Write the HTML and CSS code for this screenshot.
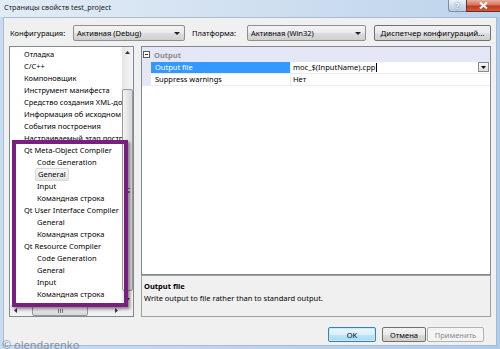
FILE: index.html
```html
<!DOCTYPE html>
<html lang="ru">
<head>
    <meta charset="UTF-8">
    <title>Страницы свойств test_project</title>
    <link rel="stylesheet" href="styles.css">
</head>
<body>

<div class="window">
    <div class="titlebar">
        <span class="title">Страницы свойств test_project</span>
        <div class="caption-buttons">
            <span class="cap-help">?</span>
            <span class="cap-close">
                <svg width="9" height="7" viewBox="0 0 9 7"><path d="M1 0.5 L8 6.5 M8 0.5 L1 6.5" stroke="#fff" stroke-width="2"/></svg>
            </span>
        </div>
    </div>

    <div class="client">
        <div class="config-row">
            <span class="config-label label-config">Конфигурация:</span>
            <div class="combo combo-config">
                <span>Активная (Debug)</span>
                <svg width="6" height="3" viewBox="0 0 6 3"><path d="M0 0h6L3 3z" fill="#222"/></svg>
            </div>
            <span class="config-label label-platform">Платформа:</span>
            <div class="combo combo-platform">
                <span>Активная (Win32)</span>
                <svg width="6" height="3" viewBox="0 0 6 3"><path d="M0 0h6L3 3z" fill="#222"/></svg>
            </div>
            <div class="btn btn-manager">Диспетчер конфигураций...</div>
        </div>

        <div class="panes">
            <div class="tree-pane">
                <div class="tree-view">
                    <ul class="tree">
                        <li class="node">Отладка</li>
                        <li class="node">C/C++</li>
                        <li class="node">Компоновщик</li>
                        <li class="node">Инструмент манифеста</li>
                        <li class="node">Средство создания XML-документов</li>
                        <li class="node">Информация об исходном коде</li>
                        <li class="node">События построения</li>
                        <li class="node">Настраиваемый этап построения</li>
                        <li class="node">Qt Meta-Object Compiler</li>
                        <li class="node child">Code Generation</li>
                        <li class="node child"><span class="current">General</span></li>
                        <li class="node child">Input</li>
                        <li class="node child">Командная строка</li>
                        <li class="node">Qt User Interface Compiler</li>
                        <li class="node child">General</li>
                        <li class="node child">Командная строка</li>
                        <li class="node">Qt Resource Compiler</li>
                        <li class="node child">Code Generation</li>
                        <li class="node child">General</li>
                        <li class="node child">Input</li>
                        <li class="node child">Командная строка</li>
                    </ul>
                    <div class="vscroll">
                        <div class="sb-arrow">
                            <svg width="5" height="3" viewBox="0 0 5 3"><path d="M0 3h5L2.5 0z" fill="#333"/></svg>
                        </div>
                        <div class="vtrack"><div class="thumb vthumb"><span class="grip-v"></span></div></div>
                        <div class="sb-arrow">
                            <svg width="5" height="3" viewBox="0 0 5 3"><path d="M0 0h5L2.5 3z" fill="#333"/></svg>
                        </div>
                    </div>
                </div>
                <div class="hscroll">
                    <div class="sb-arrow">
                        <svg width="3" height="5" viewBox="0 0 3 5"><path d="M3 0v5L0 2.5z" fill="#333"/></svg>
                    </div>
                    <div class="htrack"><div class="thumb hthumb"><span class="grip-h"></span></div></div>
                    <div class="sb-arrow">
                        <svg width="3" height="5" viewBox="0 0 3 5"><path d="M0 0v5L3 2.5z" fill="#333"/></svg>
                    </div>
                    <div class="sb-corner"></div>
                </div>

                <!-- annotation frame drawn over the tree -->
                <div class="mark-box"></div>
            </div>

            <div class="right-pane">
                <div class="grid">
                    <div class="cat-row">
                        <span class="expander"></span>
                        <span class="cat-name">Output</span>
                    </div>
                    <div class="prop-row">
                        <span class="prop-margin"></span>
                        <span class="prop-name selected">Output file</span>
                        <span class="prop-value">
                            <span>moc_$(InputName).cpp<span class="caret"></span></span>
                            <span class="drop-btn">
                                <svg width="5" height="3" viewBox="0 0 5 3"><path d="M0 0h5L2.5 3z" fill="#111"/></svg>
                            </span>
                        </span>
                    </div>
                    <div class="prop-row">
                        <span class="prop-margin"></span>
                        <span class="prop-name">Suppress warnings</span>
                        <span class="prop-value">Нет</span>
                    </div>
                </div>
                <div class="description">
                    <div class="desc-title">Output file</div>
                    <div class="desc-text">Write output to file rather than to standard output.</div>
                </div>
            </div>
        </div>

        <div class="dialog-buttons">
            <div class="btn btn-ok">OK</div>
            <div class="btn btn-cancel">Отмена</div>
            <div class="btn btn-apply">Применить</div>
        </div>
    </div>

    <div class="watermark">© olendarenko</div>
</div>

</body>
</html>
```

FILE: styles.css
```css
* {
    box-sizing: border-box;
}

body {
    margin: 0;
    width: 500px;
    height: 349px;
    overflow: hidden;
    font-family: "Noto Sans", "Open Sans", sans-serif;
    font-size: 7.5px;
    color: #000;
}

.window {
    position: relative;
    width: 500px;
    height: 349px;
    display: flex;
    flex-direction: column;
    background: linear-gradient(90deg, #c9dbef, #bcd2ea 60%, #aecbe8);
    overflow: hidden;
}

/* Title bar */
.titlebar {
    height: 17px;
    display: flex;
    justify-content: space-between;
    align-items: flex-start;
    padding-left: 4px;
    background: linear-gradient(90deg, #e2ecf6, #d2e1f1 45%, #bdd3eb);
}

.title {
    font-size: 7.3px;
    line-height: 15px;
    color: #1a1a1a;
}

.caption-buttons {
    display: flex;
    margin-right: -6px;
}

.cap-help {
    width: 18px;
    height: 12px;
    border: 1px solid #7b8ea8;
    border-right: none;
    border-top: none;
    border-radius: 0 0 0 3px;
    background: linear-gradient(#eef3f9, #cfdceb 50%, #bccde2);
    color: #fff;
    text-shadow: 0 0 2px #3a4d66;
    font-size: 8px;
    font-weight: bold;
    line-height: 11px;
    text-align: center;
}

.cap-close {
    width: 40px;
    height: 12px;
    border: 1px solid #6b2f25;
    border-top: none;
    border-radius: 0 0 3px 0;
    background: linear-gradient(#eab0a2, #d7735c 45%, #c2391e 55%, #d25a3c);
    display: flex;
    align-items: center;
    padding-left: 12px;
}

/* Client area */
.client {
    flex: 1;
    margin: 0 3px 3px;
    background: #f0f0f0;
    border: 1px solid #a6bbd4;
    display: flex;
    flex-direction: column;
}

.config-row {
    display: flex;
    align-items: center;
    height: 16px;
    margin-top: 7px;
    padding-left: 6px;
}

.config-label {
    white-space: nowrap;
}

.label-config {
    width: 63px;
}

.label-platform {
    width: 55px;
    margin-left: 7px;
}

.combo {
    height: 16px;
    border: 1px solid #8e8f8f;
    border-radius: 2px;
    background: linear-gradient(#f3f3f3, #ebebeb 50%, #dddddd 51%, #cfcfcf);
    display: flex;
    align-items: center;
    justify-content: space-between;
    padding: 0 4px 0 3px;
}

.combo-config {
    width: 112px;
}

.combo-platform {
    width: 119px;
}

.btn {
    height: 16px;
    border: 1px solid #707070;
    border-radius: 2px;
    background: linear-gradient(#f2f2f2, #ebebeb 50%, #dddddd 51%, #cfcfcf);
    display: flex;
    align-items: center;
    justify-content: center;
    white-space: nowrap;
}

.btn-manager {
    width: 117px;
    margin-left: 8px;
    font-size: 7.8px;
}

/* Panes */
.panes {
    display: flex;
    gap: 7px;
    height: 271px;
    margin-top: 5px;
    padding: 0 5px;
}

.tree-pane {
    position: relative;
    width: 125px;
    border: 1px solid #828790;
    background: #fff;
    display: flex;
    flex-direction: column;
}

.tree-view {
    flex: 1;
    display: flex;
    min-height: 0;
}

.tree {
    flex: 1;
    list-style: none;
    margin: 0;
    padding: 1px 0 0;
    overflow: hidden;
}

.node {
    height: 12px;
    line-height: 12px;
    padding-left: 14px;
    white-space: nowrap;
}

.node.child {
    padding-left: 27px;
}

.current {
    display: inline-block;
    margin-left: -2px;
    padding: 0 2px;
    line-height: 11px;
    border: 1px solid #d9d9d9;
    border-radius: 2px;
    background: linear-gradient(#f8f8f8, #e5e5e5);
}

.vscroll {
    width: 11px;
    display: flex;
    flex-direction: column;
    background: linear-gradient(90deg, #e6e6e6, #f4f4f4);
}

.sb-arrow {
    width: 11px;
    height: 11px;
    flex: none;
    display: flex;
    align-items: center;
    justify-content: center;
}

.vtrack {
    flex: 1;
    padding: 31px 0 3px;
}

.thumb {
    border: 1px solid #999;
    border-radius: 2px;
    display: flex;
    align-items: center;
    justify-content: center;
}

.vthumb {
    height: 100%;
    background: linear-gradient(90deg, #f4f4f4, #e6e6e6 50%, #d6d6d6);
}

.grip-v {
    width: 5px;
    height: 5px;
    border-top: 1px solid #7a7a7a;
    border-bottom: 1px solid #7a7a7a;
    background: linear-gradient(#fff 0 1px, #7a7a7a 1px 2px, transparent 2px);
    background-position: 0 1px;
}

.hscroll {
    height: 11px;
    display: flex;
    background: linear-gradient(#e6e6e6, #f4f4f4);
}

.htrack {
    flex: 1;
    padding: 0 23px 0 11px;
}

.hthumb {
    width: 56px;
    height: 100%;
    background: linear-gradient(#f4f4f4, #e6e6e6 50%, #d6d6d6);
}

.grip-h {
    width: 5px;
    height: 4px;
    border-left: 1px solid #7a7a7a;
    border-right: 1px solid #7a7a7a;
    background: linear-gradient(90deg, transparent 1px, #7a7a7a 1px 2px, transparent 2px);
}

.sb-corner {
    width: 11px;
    background: #f0f0f0;
}

.mark-box {
    position: absolute;
    left: 2px;
    top: 93px;
    width: 116px;
    height: 167px;
    border: 4px solid #7a1f82;
    box-shadow: 2px 2px 3px rgba(0, 0, 0, 0.45);
}

/* Property grid */
.right-pane {
    width: 350px;
    display: flex;
    flex-direction: column;
}

.grid {
    height: 229px;
    border: 1px solid #828790;
    background: #fff;
}

.cat-row {
    height: 15px;
    display: flex;
    align-items: center;
    background: #e4e8f6;
}

.expander {
    position: relative;
    width: 7px;
    height: 7px;
    margin-left: 1px;
    border: 1px solid #5a5a5a;
    background: #fff;
}

.expander::after {
    content: "";
    position: absolute;
    left: 1px;
    top: 2px;
    width: 3px;
    height: 1px;
    background: #333;
}

.cat-name {
    margin-left: 4px;
    font-weight: bold;
    color: #8c8c8c;
}

.prop-row {
    height: 12px;
    display: flex;
    line-height: 11px;
    border-bottom: 1px solid #ededed;
}

.prop-margin {
    width: 9px;
    background: #e4e8f6;
}

.prop-name {
    width: 139px;
    padding-left: 4px;
}

.prop-name.selected {
    background: #3399ff;
    color: #fff;
}

.prop-value {
    flex: 1;
    display: flex;
    justify-content: space-between;
    border-left: 1px solid #ededed;
    padding-left: 2px;
}

.caret {
    display: inline-block;
    width: 1px;
    height: 9px;
    margin-left: 1px;
    vertical-align: -2px;
    background: #000;
}

.drop-btn {
    width: 11px;
    height: 10px;
    margin: 0 1px 0 0;
    border: 1px solid #8a8a8a;
    background: linear-gradient(#f6f6f6, #dcdcdc);
    display: flex;
    align-items: center;
    justify-content: center;
}

.description {
    height: 42px;
    border: 1px solid #a0a0a0;
    background: #f0f0f0;
    padding: 4px 2px 0;
    line-height: 12px;
}

.desc-title {
    font-weight: bold;
}

/* Dialog buttons */
.dialog-buttons {
    display: flex;
    justify-content: flex-end;
    margin-top: 10px;
    padding-right: 12px;
}

.dialog-buttons .btn {
    height: 15px;
}

.btn-ok {
    width: 48px;
    margin-right: 6px;
    border-color: #3c7fb1;
    background: linear-gradient(#eaf6fd, #d9f0fc 50%, #bee6fd 51%, #a7d9f5);
    box-shadow: inset 0 0 0 1px #c8eafb;
}

.btn-cancel {
    width: 44px;
    margin-right: 1px;
}

.btn-apply {
    width: 57px;
    border-color: #adb2b5;
    background: #f4f4f4;
    color: #8a8a8a;
}

.watermark {
    position: absolute;
    left: 2px;
    bottom: -2px;
    font-size: 11px;
    line-height: 12px;
    color: #8494a6;
}
```
